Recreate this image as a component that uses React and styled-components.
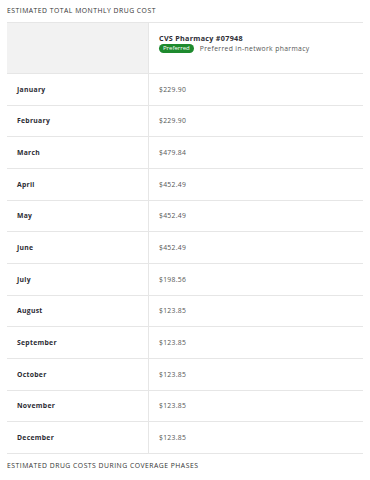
import styled, { createGlobalStyle } from 'styled-components'

const GlobalStyle = createGlobalStyle`
    body {
        margin: 0;
        background: #fff;
        font-family: "Open Sans", "Liberation Sans", sans-serif;
        color: #2b2b33;
    }
`

const months = [
    ['January', '$229.90'],
    ['February', '$229.90'],
    ['March', '$479.84'],
    ['April', '$452.49'],
    ['May', '$452.49'],
    ['June', '$452.49'],
    ['July', '$198.56'],
    ['August', '$123.85'],
    ['September', '$123.85'],
    ['October', '$123.85'],
    ['November', '$123.85'],
    ['December', '$123.85'],
]

const App = () => {
    return (
        <>
            <GlobalStyle />
            <Page>
                <SectionTitle>Estimated total monthly drug cost</SectionTitle>
                <Table>
                    <HeadRow>
                        <BlankCell />
                        <PharmacyCell>
                            <PharmacyName>CVS Pharmacy #07948</PharmacyName>
                            <BadgeLine>
                                <Badge>Preferred</Badge>
                                <BadgeNote>Preferred in-network pharmacy</BadgeNote>
                            </BadgeLine>
                        </PharmacyCell>
                    </HeadRow>
                    {months.map(([month, cost]) => (
                        <Row key={month}>
                            <MonthCell>{month}</MonthCell>
                            <CostCell>{cost}</CostCell>
                        </Row>
                    ))}
                </Table>
                <SectionTitle $bottom>Estimated drug costs during coverage phases</SectionTitle>
            </Page>
        </>
    )
}

export default App

const Page = styled.div`
    width: 356px;
    padding: 6px 7px 0;
`

const SectionTitle = styled.div`
    font-size: 6.8px;
    letter-spacing: 0.5px;
    text-transform: uppercase;
    color: #333;
    line-height: 9px;
    padding: ${p => (p.$bottom ? '7px 0 0' : '0 0 7px')};
`

const Table = styled.div`
    border-top: 1px solid #e6e6e6;
    border-bottom: 1px solid #e6e6e6;
`

const HeadRow = styled.div`
    display: grid;
    grid-template-columns: 142px 1fr;
    height: 50px;
    border-bottom: 1px solid #e6e6e6;
`

const BlankCell = styled.div`
    background: #f2f2f2;
    border-right: 1px solid #e6e6e6;
`

const PharmacyCell = styled.div`
    padding: 11px 0 0 10px;
`

const PharmacyName = styled.div`
    font-size: 7.2px;
    font-weight: 700;
    letter-spacing: 0.3px;
    color: #2b2b33;
    line-height: 9px;
`

const BadgeLine = styled.div`
    display: flex;
    align-items: center;
    gap: 6px;
    margin-top: 1px;
`

const Badge = styled.span`
    background: #1e8a2e;
    color: #fff;
    font-size: 6px;
    line-height: 9px;
    padding: 0 4px;
    border-radius: 5px;
`

const BadgeNote = styled.span`
    font-size: 6.8px;
    letter-spacing: 0.35px;
    color: #555;
`

const Row = styled.div`
    display: grid;
    grid-template-columns: 142px 1fr;
    height: 30.67px;
    & + & {
        border-top: 1px solid #e6e6e6;
    }
`

const MonthCell = styled.div`
    display: flex;
    align-items: center;
    padding-left: 10px;
    border-right: 1px solid #e6e6e6;
    font-size: 6.8px;
    font-weight: 700;
    letter-spacing: 0.3px;
    color: #2b2b33;
`

const CostCell = styled.div`
    display: flex;
    align-items: center;
    padding-left: 10px;
    font-size: 6.8px;
    letter-spacing: 0.3px;
    color: #555;
`
